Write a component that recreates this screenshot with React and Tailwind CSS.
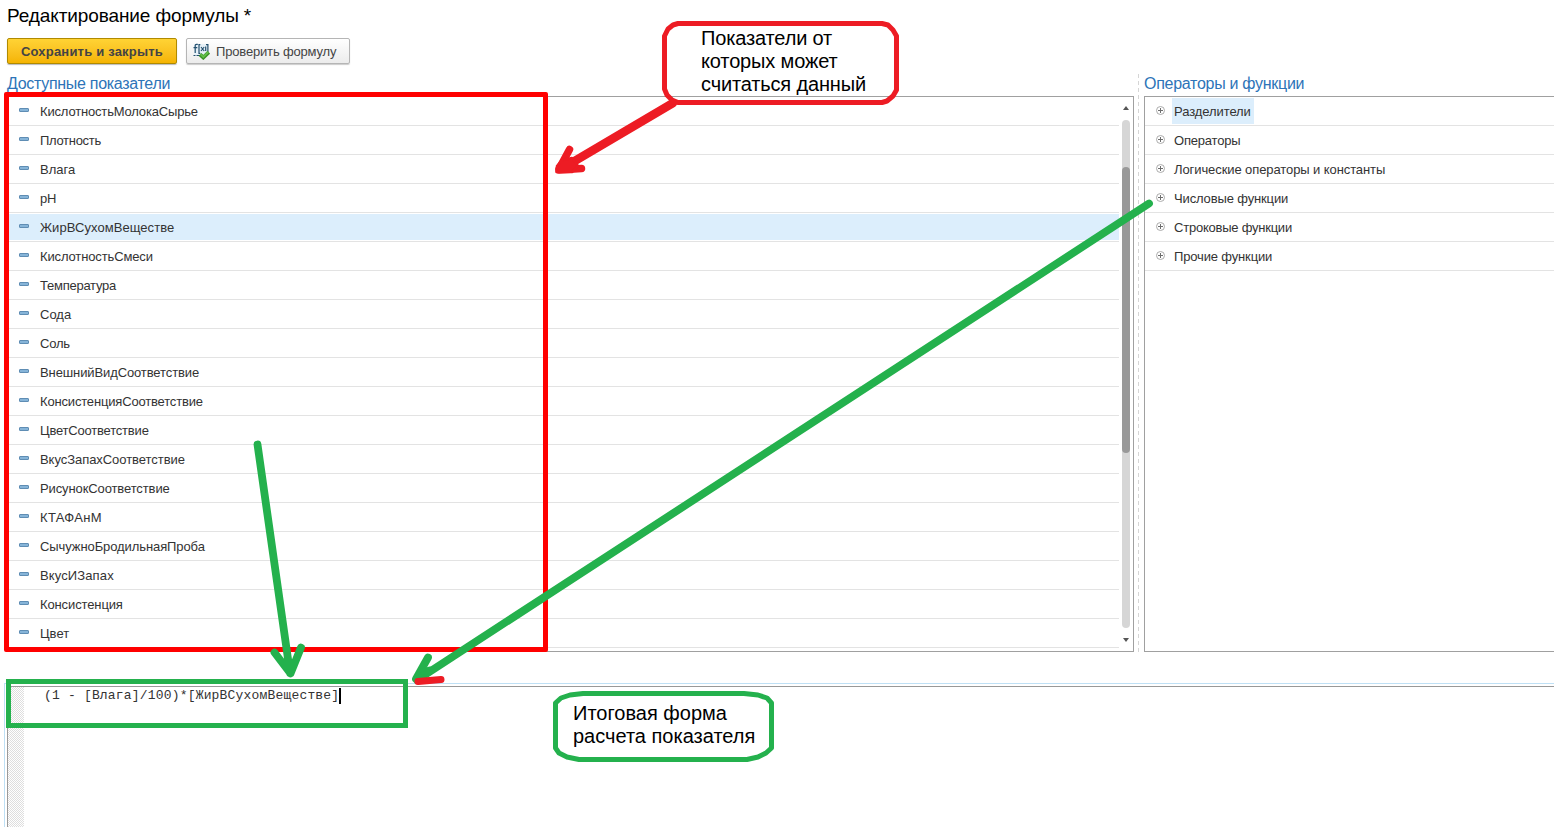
const indicators = [
  { label: "КислотностьМолокаСырье", tracking: "tracking-[-0.17px]" },
  { label: "Плотность", tracking: "tracking-[-0.3px]" },
  { label: "Влага", tracking: "tracking-normal" },
  { label: "pH", tracking: "tracking-[-0.3px]" },
  { label: "ЖирВСухомВеществе", tracking: "tracking-[0.06px]" },
  { label: "КислотностьСмеси", tracking: "tracking-[-0.13px]" },
  { label: "Температура", tracking: "tracking-[-0.25px]" },
  { label: "Сода", tracking: "tracking-normal" },
  { label: "Соль", tracking: "tracking-[-0.2px]" },
  { label: "ВнешнийВидСоответствие", tracking: "tracking-[-0.11px]" },
  { label: "КонсистенцияСоответствие", tracking: "tracking-[-0.17px]" },
  { label: "ЦветСоответствие", tracking: "tracking-[-0.2px]" },
  { label: "ВкусЗапахСоответствие", tracking: "tracking-[-0.05px]" },
  { label: "РисунокСоответствие", tracking: "tracking-[-0.11px]" },
  { label: "КТАФАнМ", tracking: "tracking-[0.35px]" },
  { label: "СычужноБродильнаяПроба", tracking: "tracking-[-0.09px]" },
  { label: "ВкусИЗапах", tracking: "tracking-[0.12px]" },
  { label: "Консистенция", tracking: "tracking-[-0.12px]" },
  { label: "Цвет", tracking: "tracking-normal" },
];

const groups = [
  { label: "Разделители", tracking: "tracking-[-0.08px]" },
  { label: "Операторы", tracking: "tracking-[-0.2px]" },
  { label: "Логические операторы и константы", tracking: "tracking-[-0.09px]" },
  { label: "Числовые функции", tracking: "tracking-[-0.14px]" },
  { label: "Строковые функции", tracking: "tracking-[-0.23px]" },
  { label: "Прочие функции", tracking: "tracking-[-0.15px]" },
];

function FormulaIcon() {
  return (
    <svg width="17" height="17" viewBox="0 0 17 17" fill="none" className="shrink-0">
      <path d="M1 1H15V12H1Z" fill="#e6f0f7" />
      <g stroke="#24506f" strokeWidth="1.2">
        <path d="M4.800 1.400H3.400Q2.200 1.400 2.200 2.600V10M.5 4.600H4.300" />
        <path d="M7.300 1.600H6V10.400H7.300M13 1.600H14.900V9" />
        <path d="M8 4L11.200 8M11.200 4L8 8" />
        <path d="M12.700 3.500V8" />
        <path d="M.5 12.500H2.500M3.500 12.500H7" />
      </g>
      <path d="M7 11.500L10.300 14.500L15.800 9.200" stroke="#3c9228" strokeWidth="3.8" />
      <path d="M7.400 11.200L10.300 13.900L15.300 9" stroke="#62bf48" strokeWidth="1.800" />
    </svg>
  );
}

function PlusIcon() {
  return (
    <svg width="9" height="9" viewBox="0 0 9 9" fill="none" className="shrink-0">
      <circle cx="4.500" cy="4.500" r="4" stroke="#ababab" />
      <path d="M2 4.500H7M4.500 2V7" stroke="#6e6e6e" />
    </svg>
  );
}

function IndicatorRow({ label, tracking, selected }) {
  return (
    <li className="flex h-[29px] shrink-0 flex-col border-b border-[#e3e3e3] pt-px pb-px">
      <div className={selected ? "flex h-[26px] items-center bg-[#dceefc]" : "flex h-[26px] items-center"}>
        <span className="mb-[2px] ml-[10px] h-1 w-[10px] shrink-0 rounded-[1px] border border-[#5f8db4] bg-[#86b4d8]" />
        <span className={"ml-[11px] pt-px " + tracking}>{label}</span>
      </div>
    </li>
  );
}

function Scrollbar() {
  return (
    <div className="flex w-[14px] shrink-0 flex-col items-center pt-[9px] pb-[9px]">
      <svg width="6" height="4" viewBox="0 0 6 4"><path d="M3 0L6 4H0Z" fill="#555" /></svg>
      <div className="mt-[10px] h-[508px] w-2 rounded-full bg-[#d6d6d6] pt-[47px]">
        <div className="h-[286px] w-2 rounded-full bg-[#999]" />
      </div>
      <svg className="mt-[10px]" width="6" height="4" viewBox="0 0 6 4"><path d="M0 0H6L3 4Z" fill="#555" /></svg>
    </div>
  );
}

function Annotations() {
  return (
    <>
      <div className="absolute top-[92px] left-1 h-[560px] w-[544px] rounded-[2px] border-[5px] border-[#ff0000]" />
      <div className="absolute top-[679px] left-[6px] h-[49px] w-[402px] border-[5px] border-[#24b14d]" />
      <svg className="absolute top-0 left-0" width="1554" height="827" fill="none" strokeLinecap="round" strokeLinejoin="round">
        <path d="M678 23.500H882L888 25L893 30L896.500 36V90L893 96L887 101L882 102.500H678L672 100L667 95L664.500 89V36L668 29L673 25Z" stroke="#ed1c24" strokeWidth="5" />
        <path d="M673 103L562 168.500" stroke="#ed1c24" strokeWidth="8.500" />
        <path d="M569.500 149.500L559 169M559 170L581.500 168.500" stroke="#ed1c24" strokeWidth="7.500" />
        <path d="M556.500 172L557 166L562 160L572 158L578 166L572 172Z" fill="#ed1c24" stroke="#ed1c24" strokeWidth="2.500" />
        <path d="M257.500 444.500L290 673M274.500 652.500L290.500 673.500L301 647.500M1149 203.500L417 680M428 657.500L416 679" stroke="#24b14d" strokeWidth="7.800" />
        <path d="M415 679L419 671L430 668L424 677Z" fill="#24b14d" stroke="#24b14d" strokeWidth="3" />
        <path d="M418 681.500L441 679.500" stroke="#ed1c24" strokeWidth="7" />
        <path d="M583 693.500H744L758 695L767 698L771.500 703V748L766 753L758 757L747 759.500H579L567 757L559 753L555.500 748V703L561 698L570 695Z" stroke="#24b14d" strokeWidth="5" />
      </svg>
      <div className="absolute top-[27px] left-[701px] text-[20px] leading-[23px] tracking-[-0.15px] whitespace-nowrap text-black">
        Показатели от<br />которых может<br />считаться данный
      </div>
      <div className="absolute top-[702px] left-[573px] text-[20px] leading-[23px] whitespace-nowrap text-black">
        Итоговая форма<br />расчета показателя
      </div>
    </>
  );
}

export default function App() {
  return (
    <div className="relative flex h-[827px] w-[1554px] flex-col overflow-hidden bg-white font-['Liberation_Sans',Arial,sans-serif] text-[13px] text-[#333]">
      <h1 className="mt-[5px] ml-[7px] h-[22px] text-[19px] leading-[22px] tracking-[-0.1px] text-black">Редактирование формулы *</h1>
      <div className="mt-[11px] ml-[7px] flex h-[26px] gap-[9px]">
        <button className="w-[170px] rounded-[2px] border border-[#b08a00] bg-linear-to-b from-[#ffd334] to-[#f5b400] pt-px text-[13px] font-bold tracking-[0.2px] text-[#444] shadow-[0_1px_1px_#bbb]">
          Сохранить и закрыть
        </button>
        <button className="flex w-[164px] items-center gap-[6px] rounded-[2px] border border-[#b5b5b5] bg-linear-to-b from-white to-[#ececec] pl-[6px] text-[13px] tracking-[-0.17px] whitespace-nowrap text-[#444] shadow-[0_1px_1px_#ccc]">
          <FormulaIcon />
          <span className="pt-px">Проверить формулу</span>
        </button>
      </div>

      <main className="mt-[10px] flex h-[578px] shrink-0">
        <section className="ml-[7px] flex w-[1127px] shrink-0 flex-col">
          <h2 className="h-[22px] text-[16px] leading-[19px] tracking-[-0.3px] text-[#2d74b8]">Доступные показатели</h2>
          <div className="flex h-[556px] border border-[#a0a0a0]">
            <ul className="ml-px flex w-[1110px] shrink-0 flex-col">
              {indicators.map((item, i) => (
                <IndicatorRow key={item.label} label={item.label} tracking={item.tracking} selected={i === 4} />
              ))}
            </ul>
            <Scrollbar />
          </div>
        </section>
        <div className="ml-1 w-px shrink-0 bg-[repeating-linear-gradient(to_bottom,#d5d5d5_0_4px,transparent_4px_7px)]" />
        <section className="ml-[5px] flex w-[420px] shrink-0 flex-col">
          <h2 className="h-[22px] text-[16px] leading-[19px] tracking-[-0.28px] text-[#2d74b8]">Операторы и функции</h2>
          <div className="h-[556px] border border-[#a0a0a0]">
            <ul>
              {groups.map(({ label, tracking }, i) => (
                <li key={label} className="flex h-[29px] items-start border-b border-[#e3e3e3] pt-px pl-[11px]">
                  <span className="mt-2"><PlusIcon /></span>
                  <span className={(i === 0 ? "ml-[7px] h-[26px] bg-[#dceefc] pr-[3px] pl-[2px] leading-[27px] " : "ml-[7px] h-[26px] px-[2px] leading-[27px] ") + tracking}>
                    {label}
                  </span>
                </li>
              ))}
            </ul>
          </div>
        </section>
      </main>

      <section className="mt-[31px] ml-1 flex grow border-t border-l border-[#bfe0f5] pt-[2px] pl-[2px]">
        <div className="flex grow border-t border-l border-[#999]">
          <div className="w-4 bg-[repeating-conic-gradient(#dedede_0_25%,#ffffff_0_50%)] bg-[length:2px_2px]" />
          <pre className="ml-5 flex h-5 font-['Liberation_Mono','Courier_New',monospace] text-[13px] leading-[17px] tracking-[0.18px] text-[#333]">
            (1 - [Влага]/100)*[ЖирВСухомВеществе]
            <span className="mt-px h-4 w-[2px] bg-black" />
          </pre>
        </div>
      </section>
      <Annotations />
    </div>
  );
}
